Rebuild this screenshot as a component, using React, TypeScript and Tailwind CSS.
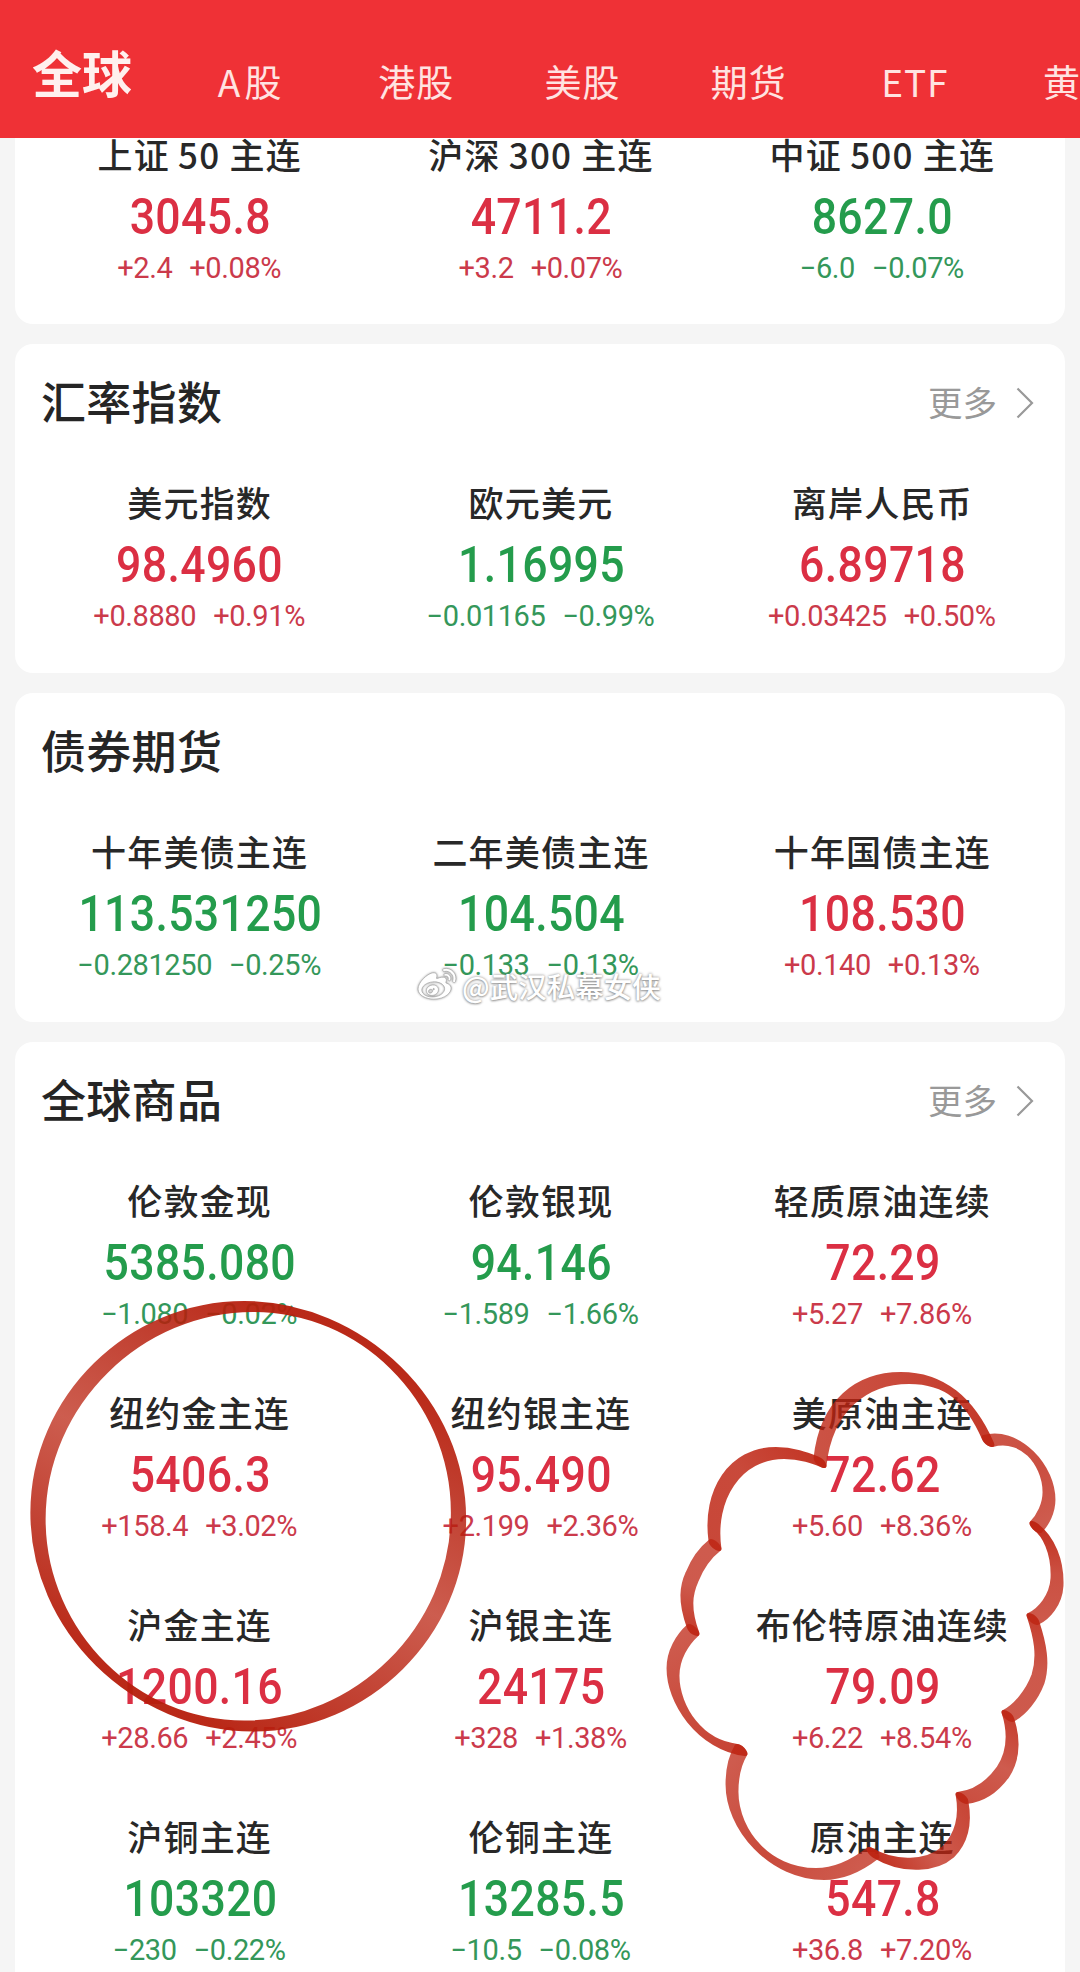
import { FaWeibo } from 'react-icons/fa';

type Quote = {
  name: string;
  value: string;
  change: string;
  percent: string;
};

type Section = {
  title: string;
  more: boolean;
  quotes: Quote[];
};

const tabs = ['A\u200A股', '港股', '美股', '期货', 'ETF', '黄金'];

const indexFutures: Quote[] = [
  { name: '上证\u200950 主连', value: '3045.8', change: '+2.4', percent: '+0.08%' },
  { name: '沪深\u2009300 主连', value: '4711.2', change: '+3.2', percent: '+0.07%' },
  { name: '中证\u2009500 主连', value: '8627.0', change: '−6.0', percent: '−0.07%' }
];

const sections: Section[] = [
  {
    title: '汇率指数',
    more: true,
    quotes: [
      { name: '美元指数', value: '98.4960', change: '+0.8880', percent: '+0.91%' },
      { name: '欧元美元', value: '1.16995', change: '−0.01165', percent: '−0.99%' },
      { name: '离岸人民币', value: '6.89718', change: '+0.03425', percent: '+0.50%' }
    ]
  },
  {
    title: '债券期货',
    more: false,
    quotes: [
      { name: '十年美债主连', value: '113.531250', change: '−0.281250', percent: '−0.25%' },
      { name: '二年美债主连', value: '104.504', change: '−0.133', percent: '−0.13%' },
      { name: '十年国债主连', value: '108.530', change: '+0.140', percent: '+0.13%' }
    ]
  },
  {
    title: '全球商品',
    more: true,
    quotes: [
      { name: '伦敦金现', value: '5385.080', change: '−1.080', percent: '−0.02%' },
      { name: '伦敦银现', value: '94.146', change: '−1.589', percent: '−1.66%' },
      { name: '轻质原油连续', value: '72.29', change: '+5.27', percent: '+7.86%' },
      { name: '纽约金主连', value: '5406.3', change: '+158.4', percent: '+3.02%' },
      { name: '纽约银主连', value: '95.490', change: '+2.199', percent: '+2.36%' },
      { name: '美原油主连', value: '72.62', change: '+5.60', percent: '+8.36%' },
      { name: '沪金主连', value: '1200.16', change: '+28.66', percent: '+2.45%' },
      { name: '沪银主连', value: '24175', change: '+328', percent: '+1.38%' },
      { name: '布伦特原油连续', value: '79.09', change: '+6.22', percent: '+8.54%' },
      { name: '沪铜主连', value: '103320', change: '−230', percent: '−0.22%' },
      { name: '伦铜主连', value: '13285.5', change: '−10.5', percent: '−0.08%' },
      { name: '原油主连', value: '547.8', change: '+36.8', percent: '+7.20%' }
    ]
  }
];

// Marker strokes: each lobe is a start point followed by cubic control points
const circle = [
  248.5, 1306.5, 361, 1306.5, 458.5, 1400, 458.5, 1516, 458.5, 1632, 361, 1726, 248.5, 1726,
  136, 1726, 38, 1632, 38, 1516, 38, 1400, 136, 1306.5, 248.5, 1306.5
];

const cloud = [
  [820, 1462, 826, 1405, 862, 1378, 905, 1378, 945, 1378, 970, 1400, 988, 1441],
  [988, 1441, 1020, 1432, 1049, 1465, 1049, 1496, 1049, 1508, 1043, 1520, 1036, 1527],
  [1036, 1527, 1048, 1536, 1058, 1556, 1057, 1582, 1056, 1600, 1044, 1614, 1033, 1619],
  [1033, 1619, 1040, 1640, 1044, 1660, 1038, 1679, 1032, 1695, 1020, 1710, 1008, 1716],
  [1008, 1716, 1014, 1735, 1014, 1755, 1003, 1772, 993, 1786, 980, 1796, 962, 1798],
  [962, 1798, 966, 1820, 962, 1838, 948, 1852, 932, 1866, 900, 1869, 873, 1853],
  [873, 1853, 855, 1867, 838, 1874, 820, 1874, 770, 1874, 732, 1830, 732, 1788, 732, 1772, 735, 1760, 741, 1750],
  [741, 1750, 700, 1745, 673, 1705, 673, 1672, 673, 1655, 682, 1640, 693, 1630],
  [693, 1630, 684, 1605, 686, 1590, 692, 1577, 698, 1562, 706, 1552, 715, 1545],
  [715, 1545, 708, 1495, 735, 1453, 780, 1453, 797, 1453, 810, 1458, 820, 1462]
];

type Nib = { angle: number; long: number; short: number };

const circleNib: Nib = { angle: 30, long: 17, short: 8 };
const cloudNib: Nib = { angle: 42, long: 16, short: 7.5 };

// Page coordinates -> nib coordinates, where the pen tip is a unit circle
const toNib = (x: number, y: number, nib: Nib) => {
  const a = (nib.angle * Math.PI) / 180;
  return [
    (x * Math.cos(a) + y * Math.sin(a)) / nib.long,
    (y * Math.cos(a) - x * Math.sin(a)) / nib.short
  ];
};

const toPath = (pts: number[], nib: Nib) => {
  let d = '';
  for (let i = 0; i < pts.length; i += 2) {
    const [x, y] = toNib(pts[i], pts[i + 1], nib);
    const cmd = i === 0 ? 'M' : i === 2 ? 'C' : '';
    d += `${cmd}${x.toFixed(4)} ${y.toFixed(4)} `;
  }
  return d;
};

// Ink is denser where the stroke runs along the nib
const ink = (dx: number, dy: number, nib: Nib) => {
  const a = (nib.angle * Math.PI) / 180;
  const along = Math.abs(dx * Math.cos(a) + dy * Math.sin(a)) / Math.hypot(dx, dy);
  return 0.74 + 0.2 * along ** 3;
};

const pageSpace = (nib: Nib) => `scale(${1 / nib.long} ${1 / nib.short}) rotate(${-nib.angle})`;

function Marker() {
  return (
    <svg
      className="absolute left-0 top-0 pointer-events-none"
      width="1080"
      height="1972"
      viewBox="0 0 1080 1972"
      fill="none"
    >
      <defs>
        <linearGradient
          id="ring"
          gradientUnits="userSpaceOnUse"
          gradientTransform={pageSpace(circleNib)}
          x1="149"
          y1="1702"
          x2="348"
          y2="1330"
        >
          <stop offset="0.03" stopColor="#b61e0c" stopOpacity="0.95" />
          <stop offset="0.25" stopColor="#b61e0c" stopOpacity="0.84" />
          <stop offset="0.5" stopColor="#bb2411" stopOpacity="0.74" />
          <stop offset="0.75" stopColor="#b61e0c" stopOpacity="0.84" />
          <stop offset="0.97" stopColor="#b61e0c" stopOpacity="0.95" />
        </linearGradient>
        {cloud.map((pts, i) => {
          const n = pts.length;
          return (
            <linearGradient
              key={i}
              id={`lobe${i}`}
              gradientUnits="userSpaceOnUse"
              gradientTransform={pageSpace(cloudNib)}
              x1={pts[0]}
              y1={pts[1]}
              x2={pts[n - 2]}
              y2={pts[n - 1]}
            >
              <stop offset="0" stopColor="#bd2210" stopOpacity={ink(pts[2] - pts[0], pts[3] - pts[1], cloudNib)} />
              <stop offset="0.5" stopColor="#bd2210" stopOpacity={ink(pts[8] - pts[4], pts[9] - pts[5], cloudNib)} />
              <stop
                offset="1"
                stopColor="#bd2210"
                stopOpacity={ink(pts[n - 2] - pts[n - 4], pts[n - 1] - pts[n - 3], cloudNib)}
              />
            </linearGradient>
          );
        })}
      </defs>
      <g transform={`rotate(${circleNib.angle}) scale(${circleNib.long} ${circleNib.short})`}>
        <path d={`${toPath(circle, circleNib)}Z`} stroke="url(#ring)" strokeWidth="1" />
      </g>
      <g transform={`rotate(${cloudNib.angle}) scale(${cloudNib.long} ${cloudNib.short})`}>
        {cloud.map((pts, i) => (
          <path key={i} d={toPath(pts, cloudNib)} stroke={`url(#lobe${i})`} strokeWidth="1" strokeLinecap="round" />
        ))}
      </g>
    </svg>
  );
}

function QuoteCell({ quote }: { quote: Quote }) {
  const up = quote.change.startsWith('+');

  return (
    <div className="flex flex-col items-center whitespace-nowrap">
      <p className="h-[50px] leading-[46px] text-[35px] font-medium tracking-[1.2px] text-[#282828] pl-[2px]">
        {quote.name}
      </p>
      <p
        className={`h-[72px] leading-[72px] font-[Roboto] font-medium text-[49.5px] tracking-[0.4px] pl-[3px] scale-x-90 ${
          up ? 'text-[#db2f43]' : 'text-[#249c4c]'
        }`}
      >
        {quote.value}
      </p>
      <div
        className={`flex gap-[17px] h-[30px] leading-[30px] font-[Roboto] text-[29px] tracking-[-0.4px] pl-px ${
          up ? 'text-[#cb3a4b]' : 'text-[#34975a]'
        }`}
      >
        <span>{quote.change}</span>
        <span>{quote.percent}</span>
      </div>
    </div>
  );
}

export default function App() {
  return (
    <div className="relative w-[1080px] h-[1972px] overflow-hidden bg-[#f5f5f5] font-['Noto_Sans_CJK_SC',sans-serif]">
      {/* Tabs */}
      <header className="relative z-10 flex h-[138px] bg-[#ef3136] text-[#ffe3e1] whitespace-nowrap">
        <div className="w-[166px] shrink-0 text-center text-[50px] font-bold leading-[60px] pt-[41px] pr-[2px] text-[#fff0ee]">
          全球
        </div>
        {tabs.map((tab) => (
          <div
            key={tab}
            className="w-[166.2px] shrink-0 text-center text-[37px] leading-[50px] pt-[56px] pl-[2px] tracking-[1px]"
          >
            {tab}
          </div>
        ))}
      </header>

      <main className="flex flex-col gap-5 px-[15px] -mt-[7px]">
        <section className="grid grid-cols-3 bg-white rounded-b-[18px] px-[13px] pb-[41px]">
          {indexFutures.map((quote) => (
            <QuoteCell key={quote.name} quote={quote} />
          ))}
        </section>

        {sections.map((section) => (
          <section key={section.title} className="bg-white rounded-[18px] pb-[42px]">
            <div className="flex items-center justify-between h-[120px] pl-[26px] pr-[31px] mb-[15px]">
              <h2 className="text-[45px] font-medium text-[#252525] -mt-[6px] tracking-[0.3px]">{section.title}</h2>
              {section.more && (
                <div className="flex items-center gap-[19px] text-[#999] -mt-[3px]">
                  <span className="text-[34.5px] leading-[40px] -mt-[4px]">更多</span>
                  <svg width="18" height="32" viewBox="0 0 18 32" fill="none">
                    <path d="M1.5 1.5L16 16L1.5 30.5" stroke="currentColor" strokeWidth="2.2" />
                  </svg>
                </div>
              )}
            </div>
            <div className="grid grid-cols-3 gap-y-[60px] px-[13px]">
              {section.quotes.map((quote) => (
                <QuoteCell key={quote.name} quote={quote} />
              ))}
            </div>
          </section>
        ))}
      </main>

      {/* Watermark */}
      <div className="absolute left-[417px] top-[964px] flex items-center gap-[5px] h-[42px] text-white">
        <FaWeibo className="w-[40px] h-[38px] overflow-visible stroke-[#aaa] stroke-[10px] drop-shadow-[0_0_1px_#999]" />
        <span className="text-[28.5px] leading-[42px] mt-[2px] font-medium [text-shadow:0_0_3px_#888,0_1px_2px_#aaa]">
          @武汉私幕女侠
        </span>
      </div>

      <Marker />
    </div>
  );
}
